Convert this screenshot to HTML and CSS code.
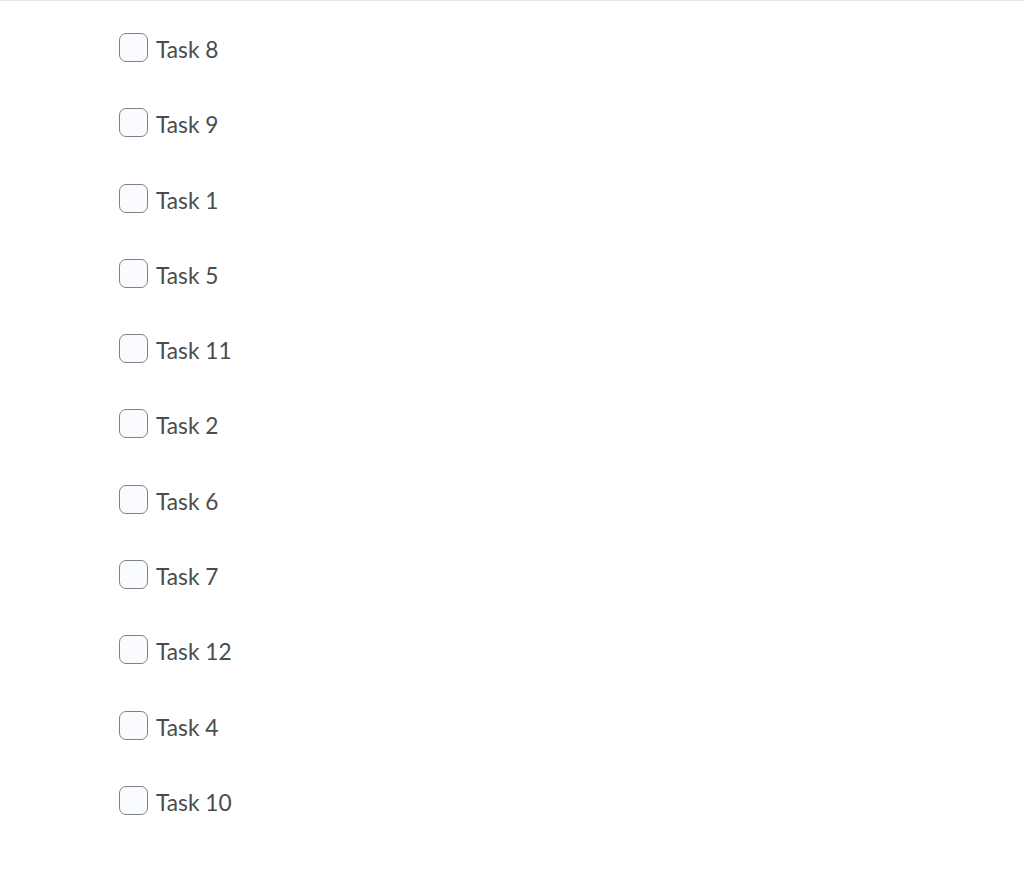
FILE: index.html
```html
<!DOCTYPE html>
<html lang="en">
<head>
    <meta charset="UTF-8">
    <title>Tasks</title>
    <link rel="stylesheet" href="styles.css">
</head>
<body>
    <div class="task-list">
        <label class="task"><input type="checkbox"><span>Task 8</span></label>
        <label class="task"><input type="checkbox"><span>Task 9</span></label>
        <label class="task"><input type="checkbox"><span>Task 1</span></label>
        <label class="task"><input type="checkbox"><span>Task 5</span></label>
        <label class="task"><input type="checkbox"><span>Task 11</span></label>
        <label class="task"><input type="checkbox"><span>Task 2</span></label>
        <label class="task"><input type="checkbox"><span>Task 6</span></label>
        <label class="task"><input type="checkbox"><span>Task 7</span></label>
        <label class="task"><input type="checkbox"><span>Task 12</span></label>
        <label class="task"><input type="checkbox"><span>Task 4</span></label>
        <label class="task"><input type="checkbox"><span>Task 10</span></label>
    </div>
</body>
</html>
```

FILE: styles.css
```css
html, body {
    margin: 0;
    background-color: #fff;
    font-family: Lato, "Open Sans", sans-serif;
    color: #494c4e;
}
body {
    border-top: 1px solid #dfe4e9;
}
.task-list {
    display: flex;
    flex-direction: column;
    gap: 46.3px;
    padding: 32px 0 0 119px;
}
.task {
    display: flex;
    align-items: center;
    gap: 8px;
    height: 29px;
    font-size: 22.7px;
    cursor: pointer;
}
.task span {
    padding-top: 4px;
}
.task input[type="checkbox"] {
    appearance: none;
    margin: 0;
    width: 29px;
    height: 29px;
    box-sizing: border-box;
    border: 1.5px solid #7d8286;
    border-radius: 7px;
    background-color: #f9fbff;
}
```
